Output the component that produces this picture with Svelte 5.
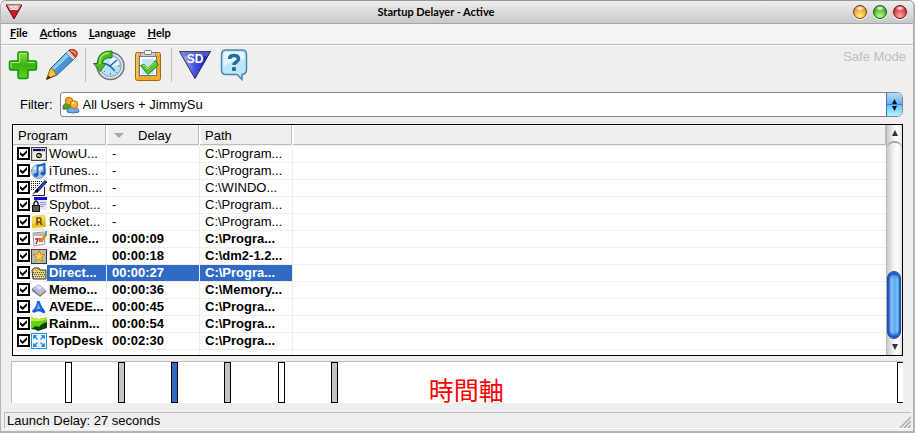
<script>
    let filter = $state('All Users + JimmySu');
    let selected = $state('Direct...');

    let programs = $state([
        { name: 'WowU...', icon: 'window', delay: 0, path: 'C:\\Program...', enabled: true },
        { name: 'iTunes...', icon: 'music', delay: 0, path: 'C:\\Program...', enabled: true },
        { name: 'ctfmon....', icon: 'pen', delay: 0, path: 'C:\\WINDO...', enabled: true },
        { name: 'Spybot...', icon: 'lock', delay: 0, path: 'C:\\Program...', enabled: true },
        { name: 'Rocket...', icon: 'rocket', delay: 0, path: 'C:\\Program...', enabled: true },
        { name: 'Rainle...', icon: 'calendar', delay: 9, path: 'C:\\Progra...', enabled: true },
        { name: 'DM2', icon: 'star', delay: 18, path: 'C:\\dm2-1.2...', enabled: true },
        { name: 'Direct...', icon: 'folder', delay: 27, path: 'C:\\Progra...', enabled: true },
        { name: 'Memo...', icon: 'chip', delay: 36, path: 'C:\\Memory...', enabled: true },
        { name: 'AVEDE...', icon: 'swoosh', delay: 45, path: 'C:\\Progra...', enabled: true },
        { name: 'Rainm...', icon: 'meter', delay: 54, path: 'C:\\Progra...', enabled: true },
        { name: 'TopDesk', icon: 'tiles', delay: 150, path: 'C:\\Progra...', enabled: true }
    ]);

    const menus = ['File', 'Actions', 'Language', 'Help'];

    let delayed = $derived(programs.filter((p) => p.delay > 0));
    let longest = $derived(Math.max(...delayed.map((p) => p.delay)));
    let current = $derived(programs.find((p) => p.name === selected));

    function formatDelay(s) {
        if (!s) return '-';
        const pad = (n) => String(n).padStart(2, '0');
        return `${pad(Math.floor(s / 3600))}:${pad(Math.floor(s / 60) % 60)}:${pad(s % 60)}`;
    }
</script>

{#snippet programIcon(kind)}
    <svg class="icon" viewBox="0 0 16 16" aria-hidden="true">
        {#if kind === 'window'}
            <rect x="0.5" y="1.5" width="15" height="13" fill="#d4d0c8" stroke="#444" />
            <rect x="2" y="3" width="12" height="2" fill="#00008b" />
            <path d="M10 4h1M12 4h1" stroke="#fff" />
            <rect x="2" y="6" width="12" height="7" fill="#f4f4f4" />
            <circle cx="8" cy="9.5" r="2.8" fill="#111" />
            <path d="M6 9l2-1 2 2-1 1-3-1z" fill="#e8e020" />
        {:else if kind === 'music'}
            <circle cx="7.5" cy="8.5" r="7" fill="#a9c4e4" stroke="#7b9cc8" />
            <path d="M2 5q5-5 10 0l-5 4z" fill="#e6f1fb" />
            <path d="M6.5 12V3l7-2v9.500" fill="none" stroke="#1a62c8" stroke-width="2" />
            <ellipse cx="5" cy="12" rx="2.500" ry="2" fill="#1a62c8" />
            <ellipse cx="12" cy="10.500" rx="2.500" ry="2" fill="#1a62c8" />
        {:else if kind === 'pen'}
            <path d="M0 1.500h11M0 3.500h9M0 5.500h7M0 7.500h6M0 9.500h4" stroke="#111" stroke-dasharray="1 1" />
            <path d="M1.500 15.500H13.500V7" fill="none" stroke="#222" />
            <path d="M15 1L5 12" stroke="#000" stroke-width="3" />
            <path d="M15 1L7 10" stroke="#2445d0" stroke-width="2" />
            <path d="M5 10l-4 5 6-4z" fill="#111" />
        {:else if kind === 'lock'}
            <rect x="3" y="0" width="13" height="13" fill="#e8ebf8" />
            <rect x="3" y="0" width="13" height="3" fill="#1010e0" />
            <path d="M9 5.500h6M9 7.500h6M9 9.500h4" stroke="#8e94d8" />
            <path d="M3 9V6q2-4 4 0v3" fill="none" stroke="#222" stroke-width="1.500" />
            <rect x="1.500" y="8.500" width="7" height="6" fill="#555" stroke="#111" />
        {:else if kind === 'rocket'}
            <path d="M1 2l13-1 1 12-14 1z" fill="#e9bd22" />
            <path d="M1 2l13-1-1 5-12 4z" fill="#f5d95a" />
            <path d="M6 11V4h3q2 2 0 4H6m3 0l2 3" fill="none" stroke="#6a4a00" stroke-width="1.500" />
            <path d="M1 15h13" stroke="#e7dcae" />
        {:else if kind === 'calendar'}
            <path d="M2 2l11-1 1 12-11 2z" fill="#fff" stroke="#999" />
            <path d="M2 2h11v3H2z" fill="#b8b8b8" />
            <path d="M4 8h3l-2 5M9 7v4M11 7v4" fill="none" stroke="#d21c2c" stroke-width="1.500" />
            <path d="M15 3l-5 8" stroke="#d89024" stroke-width="3" />
            <path d="M15 0v4" stroke="#5a9adf" stroke-width="2" />
        {:else if kind === 'star'}
            <rect x="0.500" y="1.500" width="15" height="14" fill="#b8b8b8" stroke="#333" />
            <path d="M1 1.500h14" stroke="#b12020" />
            <path d="M8 2.500l1.700 4H14l-3.500 2.800 1.500 4.500-4-2.700-4 2.700 1.500-4.500L2 6.500h4.300z" fill="#ffd53a" stroke="#b27700" stroke-width="0.700" />
        {:else if kind === 'folder'}
            <path d="M1 5l2-2h5l1 2h6v9H2z" fill="#dfc64e" stroke="#343a50" />
            <path d="M2 7.500h12M3 9.500h11M2 11.500h12" stroke="#3b5c90" stroke-dasharray="1 1" />
            <path d="M2 6.500h12M3 8.500h11M2 10.500h12M3 12.500h11" stroke="#f8eca4" stroke-dasharray="1 1" />
        {:else if kind === 'chip'}
            <path d="M1 6l7-4 7 6-6 5z" fill="#b9b9da" />
            <path d="M1 6l8 7v2L1 9z" fill="#7d7da6" />
            <path d="M9 13l6-5v2l-6 5z" fill="#9b7855" />
            <path d="M5 5l3-2 3 3-3 2z" fill="#e0e0f2" />
        {:else if kind === 'swoosh'}
            <path d="M6 2q2-1 3 1c1 4 3 6 5 9q1 3-2 2-4-3-7-1-3 2-4-1c3-3 5-6 5-10z" fill="#1659dc" />
            <path d="M7 3c1 4 2 5 3 7-3 0-5 0-7 2 3-3 4-5 4-9z" fill="#69adff" />
        {:else if kind === 'meter'}
            <path d="M0 1q8 4 16 0v11q-6 2-9 3-3-2-7-2z" fill="#173b08" />
            <path d="M0 1q8 4 16 0v5l-3 1-2 1-3 3-3-1-5 3z" fill="#5fd01a" />
            <path d="M0 1q8 4 16 0v2q-7 3-16 2z" fill="#c7ed35" />
        {:else}
            <rect width="16" height="16" fill="#2b90e8" />
            <rect x="1" y="1" width="14" height="14" fill="#eef7ff" />
            <path d="M2 2h4L5 4l2 2-1 1-2-2-2 1zM14 2v4l-2-1-2 2-1-1 2-2-1-2zM2 14v-4l2 1 2-2 1 1-2 2 1 2zM14 14h-4l1-2-2-2 1-1 2 2 2-1z" fill="#2b90e8" />
        {/if}
    </svg>
{/snippet}

<div class="window">
    <header class="titlebar">
        <svg class="logo" viewBox="0 0 16 16" aria-hidden="true">
            <path d="M0 1h16L8 15z" fill="#cf1820" stroke="#5c1015" />
            <path d="M1 1h14l-3 5H4z" fill="#d99a9a" />
            <text x="8" y="6" text-anchor="middle" class="mini">SD</text>
        </svg>
        <h1>Startup Delayer - Active</h1>
        <div class="controls">
            <button class="orb amber" aria-label="Minimize"></button>
            <button class="orb green" aria-label="Maximize"></button>
            <button class="orb red" aria-label="Close"></button>
        </div>
    </header>

    <nav class="menubar">
        {#each menus as menu}
            <button><u>{menu[0]}</u>{menu.slice(1)}</button>
        {/each}
    </nav>

    <div class="toolbar">
        <button aria-label="Add">
            <svg viewBox="0 0 32 32">
                <defs>
                    <linearGradient id="plus" x2="0" y2="1">
                        <stop offset="0" stop-color="#8be04a" />
                        <stop offset="0.5" stop-color="#3cb013" />
                        <stop offset="1" stop-color="#62d420" />
                    </linearGradient>
                </defs>
                <path d="M12.500 3h7q1.500 0 1.500 1.500V12h7q1.500 0 1.500 1.500v6q0 1.500-1.500 1.500h-7v7q0 1.500-1.500 1.500h-7q-1.500 0-1.500-1.500v-7H4q-1.500 0-1.500-1.500v-6Q2.500 12 4 12h7V4.500Q11 3 12.500 3z" fill="url(#plus)" stroke="#109408" stroke-width="1.500" />
                <path d="M12.500 13V4.500h7M4 19v-5.500h8.500M21 13.500h7" fill="none" stroke="#a9f06d" />
            </svg>
        </button>
        <button aria-label="Edit">
            <svg viewBox="0 0 32 32">
                <path d="M0.500 30.500l4-11L21 3l7 7-17 16z" fill="#4a94d5" stroke="#285f96" />
                <path d="M6 19L21 4l3 3L9 22z" fill="#91c8f0" />
                <path d="M8 22L24 7" stroke="#2d73b6" />
                <path d="M0.500 30.500l4-11 3 1 1 3 2 2z" fill="#ffc62f" stroke="#a86911" />
                <path d="M0.500 30.500l1.500-4 3 2z" fill="#3d2a1a" />
                <path d="M20 4l3-3 7 7-3 3z" fill="#ccd4dc" stroke="#73808c" />
                <path d="M23 1q6-1.500 8 2 1 3-1.500 5.500z" fill="#e8442c" stroke="#982c20" />
                <path d="M25 2q3 0 5 3" fill="none" stroke="#ff9b58" stroke-width="1.500" />
            </svg>
        </button>
        <span class="divider"></span>
        <button aria-label="Set delay">
            <svg viewBox="0 0 32 32">
                <circle cx="17.500" cy="17" r="13.500" fill="#dde2e6" stroke="#74767c" stroke-width="1.500" />
                <circle cx="17.500" cy="17" r="10.500" fill="#b8e0fa" stroke="#8a9aa8" />
                <path d="M17 8q8 0 9 8l-9 1z" fill="#e5f5ff" />
                <path d="M17.500 8v2M17.500 24v2M25 17h2M11 23l1-1M23 23l1 1M24 11l-1 1" stroke="#4681a8" />
                <path d="M24 11l-7 6 5 5M17 17l-4-2" fill="none" stroke="#2464a0" stroke-width="1.500" />
                <path d="M19 2Q4.500 1 4.500 14.500H0.500L7 22.500l6-8H9.500q0-6 9.500-6z" fill="#4eba25" stroke="#207d0c" />
                <path d="M16 4Q7 4 6.500 15" fill="none" stroke="#a1e66c" stroke-width="1.500" />
            </svg>
        </button>
        <button aria-label="Apply">
            <svg viewBox="0 0 32 32">
                <rect x="3.500" y="3.500" width="25" height="28" rx="2" fill="#efaa2b" stroke="#a86409" />
                <path d="M5 30V5h22" fill="none" stroke="#ffdb7b" />
                <rect x="7.500" y="7.500" width="17" height="19" fill="#f9fdff" stroke="#4f7faf" />
                <path d="M10 10h12v15H10z" fill="#c0e4fa" />
                <rect x="8.500" y="3.500" width="15" height="4" rx="1" fill="#cfc8cc" stroke="#777b86" />
                <rect x="12.500" y="1.500" width="7" height="4" rx="1" fill="#f2f4f6" stroke="#777b86" />
                <path d="M8.500 16.500l4-1 3 4 8-8 3 4.500L16 25.500z" fill="#5dc52c" stroke="#218310" />
                <path d="M10.500 17l2-1 3 4 7-7" fill="none" stroke="#b2ee84" />
            </svg>
        </button>
        <span class="divider"></span>
        <button aria-label="Startup Delayer">
            <svg viewBox="0 0 32 32">
                <defs>
                    <linearGradient id="tri">
                        <stop offset="0" stop-color="#c9cbf2" />
                        <stop offset="0.5" stop-color="#4550df" />
                        <stop offset="1" stop-color="#1114bd" />
                    </linearGradient>
                </defs>
                <path d="M0.500 2.500h31L16 29.500z" fill="url(#tri)" stroke="#22264e" />
                <path d="M1 2.500h30l-3 5Q16 4 4 8z" fill="#676fb8" opacity="0.7" />
                <text x="16" y="14" text-anchor="middle" class="sd">SD</text>
            </svg>
        </button>
        <button aria-label="Help">
            <svg viewBox="0 0 32 32">
                <path d="M8 1h16q4.500 0 4.500 4.500v15q0 4.500-4.500 5v5l-5-5H8q-4.500 0-4.500-4.500v-15Q3.500 1 8 1z" fill="#bce6fa" stroke="#4a86ae" stroke-width="1.500" />
                <path d="M5.500 17V6q0-3 4-3h13q4 0 4 4v3Q14 11 5.500 17z" fill="#e8f7ff" />
                <path d="M11.500 10q0-3.500 4.500-3.500t4.500 3.500c0 3-4.500 3-4.500 6" fill="none" stroke="#286d9f" stroke-width="3.500" />
                <rect x="14" y="18" width="4" height="4" rx="1" fill="#286d9f" />
            </svg>
        </button>
        <span class="mode">Safe Mode</span>
    </div>

    <div class="filter">
        <label for="filter">Filter:</label>
        <div class="combo">
            <svg class="users" viewBox="0 0 18 18" aria-hidden="true">
                <path d="M1 12q0-5 5-5t4 6H1z" fill="#47a62e" stroke="#277a1b" />
                <path d="M5 16q0-5 6-5t6 5q-6 2-12 0z" fill="#72aae0" stroke="#3d75b1" />
                <circle cx="7" cy="5" r="3.800" fill="#f5aa29" stroke="#bf6b0d" />
                <circle cx="12" cy="8.500" r="3.800" fill="#ffb72c" stroke="#c26d0d" />
                <circle cx="11" cy="7" r="1.200" fill="#ffe89a" />
            </svg>
            <select id="filter" bind:value={filter}>
                <option>All Users + JimmySu</option>
                <option>All Users</option>
                <option>JimmySu</option>
            </select>
            <span class="stepper">
                <svg viewBox="0 0 7 12" aria-hidden="true">
                    <path d="M3.500 0L6 5H1zM1 7h5l-2.500 5z" fill="#111" />
                </svg>
            </span>
        </div>
    </div>

    <main class="list">
        <table>
            <colgroup>
                <col class="first" />
                <col class="fixed" />
                <col class="fixed" />
                <col />
            </colgroup>
            <thead>
                <tr>
                    <th>Program</th>
                    <th class="sorted"><span>Delay</span></th>
                    <th>Path</th>
                    <th></th>
                </tr>
            </thead>
            <tbody>
                {#each programs as program}
                    <tr
                        class:delayed={program.delay > 0}
                        class:selected={program.name === selected}
                        onclick={() => (selected = program.name)}
                    >
                        <td class="program">
                            <div>
                                <input type="checkbox" bind:checked={program.enabled} aria-label={program.name} />
                                {@render programIcon(program.icon)}
                                <span class="name">{program.name}</span>
                            </div>
                        </td>
                        <td>{formatDelay(program.delay)}</td>
                        <td>{program.path}</td>
                        <td></td>
                    </tr>
                {/each}
                <tr class="rest"><td></td><td></td><td></td><td></td></tr>
            </tbody>
        </table>
        <div class="scrollbar">
            <button class="up" aria-label="Scroll up"></button>
            <div class="track"><div class="thumb"></div></div>
            <button class="down" aria-label="Scroll down"></button>
        </div>
    </main>

    <section class="timeline">
        {#each delayed as program, i}
            <button
                class="mark"
                class:even={i % 2 === 1}
                class:active={program.name === selected}
                class:last={program.delay === longest}
                style="left: calc((100% - 6px) * {program.delay / longest})"
                aria-label={program.name}
                onclick={() => (selected = program.name)}
            ></button>
        {/each}
        <span class="caption">時間軸</span>
    </section>

    <footer class="status">
        <span>Launch Delay: {current.delay} seconds</span>
        <svg class="grip" viewBox="0 0 12 12" aria-hidden="true">
            <path d="M1 12L12 1M5 12l7-7M9 12l3-3" stroke="#aaa" stroke-width="1.500" />
        </svg>
    </footer>
</div>

<style>
    :global(body) {
        background: #fff;
    }

    .window {
        box-sizing: border-box;
        border: 1px solid #b4b4b4;
        border-width: 1px 2px 2px 1px;
        border-top-color: #999;
        border-radius: 6px 6px 0 0;
        background: #efefef;
        color: #000;
        font: 13px/16px 'Liberation Sans', Arial, sans-serif;
        overflow: hidden;
    }

    button {
        margin: 0;
        padding: 0;
        border: 0;
        background: none;
        font: inherit;
        color: inherit;
    }

    .titlebar {
        display: grid;
        grid-template-columns: 60px 1fr 60px;
        align-items: center;
        height: 22px;
        border-bottom: 1px solid #a6a6a6;
        background: linear-gradient(#eee, #dcdcdc 50%, #c8c8c8);
    }

    .logo {
        width: 16px;
        height: 16px;
        margin-left: 5px;
    }

    .mini {
        font: bold 6px 'Liberation Sans', sans-serif;
        fill: #fff;
    }

    h1 {
        margin: 0;
        padding-right: 42px;
        font: bold 11px/20px Lato, sans-serif;
        text-align: center;
    }

    .controls {
        display: flex;
        gap: 6px;
        justify-content: flex-end;
        padding-right: 6px;
    }

    .orb {
        flex: none;
        width: 14px;
        height: 14px;
        border: 1px solid #7d3a12;
        border-radius: 50%;
        box-shadow: 0 1px 0 #fff;
    }

    .amber {
        background: radial-gradient(ellipse 5px 3px at 50% 18%, #fff, transparent), radial-gradient(circle at 50% 85%, #fff27a, #eb9a32 65%, #a9520e);
    }

    .green {
        border-color: #17590f;
        background: radial-gradient(ellipse 5px 3px at 50% 18%, #fff, transparent), radial-gradient(circle at 50% 85%, #bcff8c, #42b429 65%, #167410);
    }

    .red {
        border-color: #6e1015;
        background: radial-gradient(ellipse 5px 3px at 50% 18%, #fff, transparent), radial-gradient(circle at 50% 85%, #ffa6a0, #d9353a 65%, #8b1117);
    }

    .menubar {
        display: flex;
        align-items: flex-start;
        gap: 12px;
        height: 20px;
        padding-left: 9px;
        border-bottom: 1px solid #bcbcbc;
        background: #f4f4f4;
        font: bold 11px/18px Lato, sans-serif;
    }

    .toolbar {
        box-sizing: border-box;
        display: flex;
        align-items: center;
        gap: 7px;
        height: 41px;
        padding: 0 7px 2px 6px;
        border-top: 1px solid #fff;
    }

    .toolbar button,
    .toolbar svg {
        display: block;
        width: 32px;
        height: 32px;
    }

    .sd {
        font: bold 12px 'Liberation Sans', sans-serif;
        fill: #fff;
    }

    .divider {
        width: 1px;
        height: 34px;
        background: #bdbdbd;
    }

    .mode {
        align-self: flex-start;
        margin-left: auto;
        padding-top: 3px;
        color: #bebebe;
    }

    .filter {
        display: flex;
        align-items: center;
        gap: 7px;
        padding: 6px 10px 7px 19px;
    }

    .combo {
        box-sizing: border-box;
        display: flex;
        align-items: center;
        flex: 1;
        height: 25px;
        border: 1px solid #858585;
        border-radius: 3px 6px 6px 3px;
        background: #fff;
        overflow: hidden;
    }

    .users {
        width: 18px;
        height: 18px;
        margin-left: 1px;
    }

    select {
        flex: 1;
        height: 23px;
        padding: 0 3px;
        border: 0;
        outline: 0;
        appearance: none;
        background: none;
        font: inherit;
        color: inherit;
    }

    .stepper {
        display: flex;
        align-items: center;
        justify-content: center;
        width: 15px;
        height: 23px;
        border-left: 1px solid #3577b8;
        background: linear-gradient(#b9dcfa, #63b0f2 48%, #2f86dc 50%, #6cc6fa 55%, #b0f4ff);
    }

    .stepper svg {
        width: 7px;
        height: 12px;
    }

    .list {
        display: flex;
        margin: 0 10px 0 11px;
        border: 1px solid #000;
        background: #fff;
    }

    table {
        flex: 1;
        border-collapse: separate;
        border-spacing: 0;
        table-layout: fixed;
        width: 0;
    }

    .first {
        width: 94px;
    }

    .fixed {
        width: 93px;
    }

    th {
        box-sizing: border-box;
        height: 21px;
        padding: 0 0 0 5px;
        border-right: 1px solid #fff;
        border-bottom: 1px solid #efefef;
        background: #efefef;
        box-shadow: inset -1px -1px 0 #bcbcbc, inset 1px 1px 0 #fff;
        font-weight: normal;
        line-height: 19px;
        text-align: left;
    }

    .sorted span {
        display: flex;
        align-items: center;
        gap: 14px;
        padding-left: 2px;
    }

    .sorted span::before {
        content: '';
        border: 5px solid transparent;
        border-top-color: #aaa898;
        border-bottom: 0;
    }

    td {
        box-sizing: border-box;
        height: 17px;
        padding: 0 0 0 5px;
        border-right: 1px solid #efefef;
        border-bottom: 1px solid #efefef;
        line-height: 16px;
        white-space: nowrap;
        overflow: hidden;
    }

    td:last-child,
    th:last-child {
        border-right: 0;
    }

    td.program {
        padding-left: 4px;
    }

    .program div {
        display: flex;
        height: 16px;
    }

    .name {
        flex: 1;
        padding-left: 2px;
    }

    .delayed {
        font-weight: bold;
    }

    .selected .name,
    .selected td:nth-child(2),
    .selected td:nth-child(3) {
        background: #316ac5;
        color: #fff;
    }

    .rest td {
        height: 5px;
        border-bottom: 0;
    }

    input[type='checkbox'] {
        appearance: none;
        box-sizing: border-box;
        flex: none;
        width: 13px;
        height: 13px;
        margin: 1px 1px 0 0;
        border: 2px solid #000;
        background: #fff;
    }

    input[type='checkbox']:checked::before {
        content: '';
        display: block;
        width: 7px;
        height: 7px;
        margin: 1px;
        background: #000;
        clip-path: polygon(0 28%, 38% 62%, 100% 0, 100% 38%, 38% 100%, 0 66%);
    }

    .icon {
        flex: none;
        width: 16px;
        height: 16px;
    }

    .scrollbar {
        display: flex;
        flex-direction: column;
        width: 15px;
        border-left: 1px solid #b8b8b8;
        background: linear-gradient(90deg, #c8c8c8, #f0f0f0 40%, #fff 70%, #e4e4e4);
    }

    .up,
    .down {
        display: flex;
        align-items: center;
        justify-content: center;
        height: 16px;
    }

    .up::before,
    .down::before {
        content: '';
        border: 3px solid transparent;
    }

    .up::before {
        border-top: 0;
        border-bottom: 6px solid #333;
    }

    .down::before {
        border-bottom: 0;
        border-top: 6px solid #333;
    }

    .track {
        display: flex;
        flex: 1;
        flex-direction: column;
        justify-content: flex-end;
        border-top: 2px solid #a0a0a0;
        border-radius: 7px 7px 0 0;
    }

    .thumb {
        box-sizing: border-box;
        width: 14px;
        height: 68px;
        border: 1px solid #1e4e9c;
        border-radius: 7px;
        background: linear-gradient(90deg, #1d59cf, #94bcec 25%, #7db2ee 45%, #55a4f6 55%, #86d2ff 85%, #2a64b0);
        box-shadow: inset 0 3px 3px #1550c8, inset 0 -3px 3px #1550c8;
    }

    .timeline {
        position: relative;
        height: 41px;
        margin: 5px 10px 0;
        border-top: 1px solid #bcbcbc;
        border-left: 1px solid #bcbcbc;
        background: #fff;
    }

    .mark {
        position: absolute;
        top: 0;
        box-sizing: border-box;
        width: 7px;
        height: 41px;
        border: 1px solid #000;
        background: #fff;
    }

    .mark.even {
        background: #c4c4c4;
    }

    .mark.active {
        background: #316ac5;
    }

    .mark.last {
        width: 6px;
        border-right: 0;
    }

    .caption {
        position: absolute;
        bottom: 0;
        left: 47%;
        margin-left: -2px;
        color: #f00;
        font: 25px/28px 'Noto Sans CJK TC', sans-serif;
    }

    .status {
        display: flex;
        align-items: center;
        justify-content: space-between;
        height: 15px;
        margin: 9px 2px 2px 3px;
        padding-left: 2px;
        border: 1px solid #bcbcbc;
        border-right: 0;
        border-bottom-color: #fff;
    }

    .grip {
        align-self: flex-end;
        width: 12px;
        height: 12px;
    }
</style>
